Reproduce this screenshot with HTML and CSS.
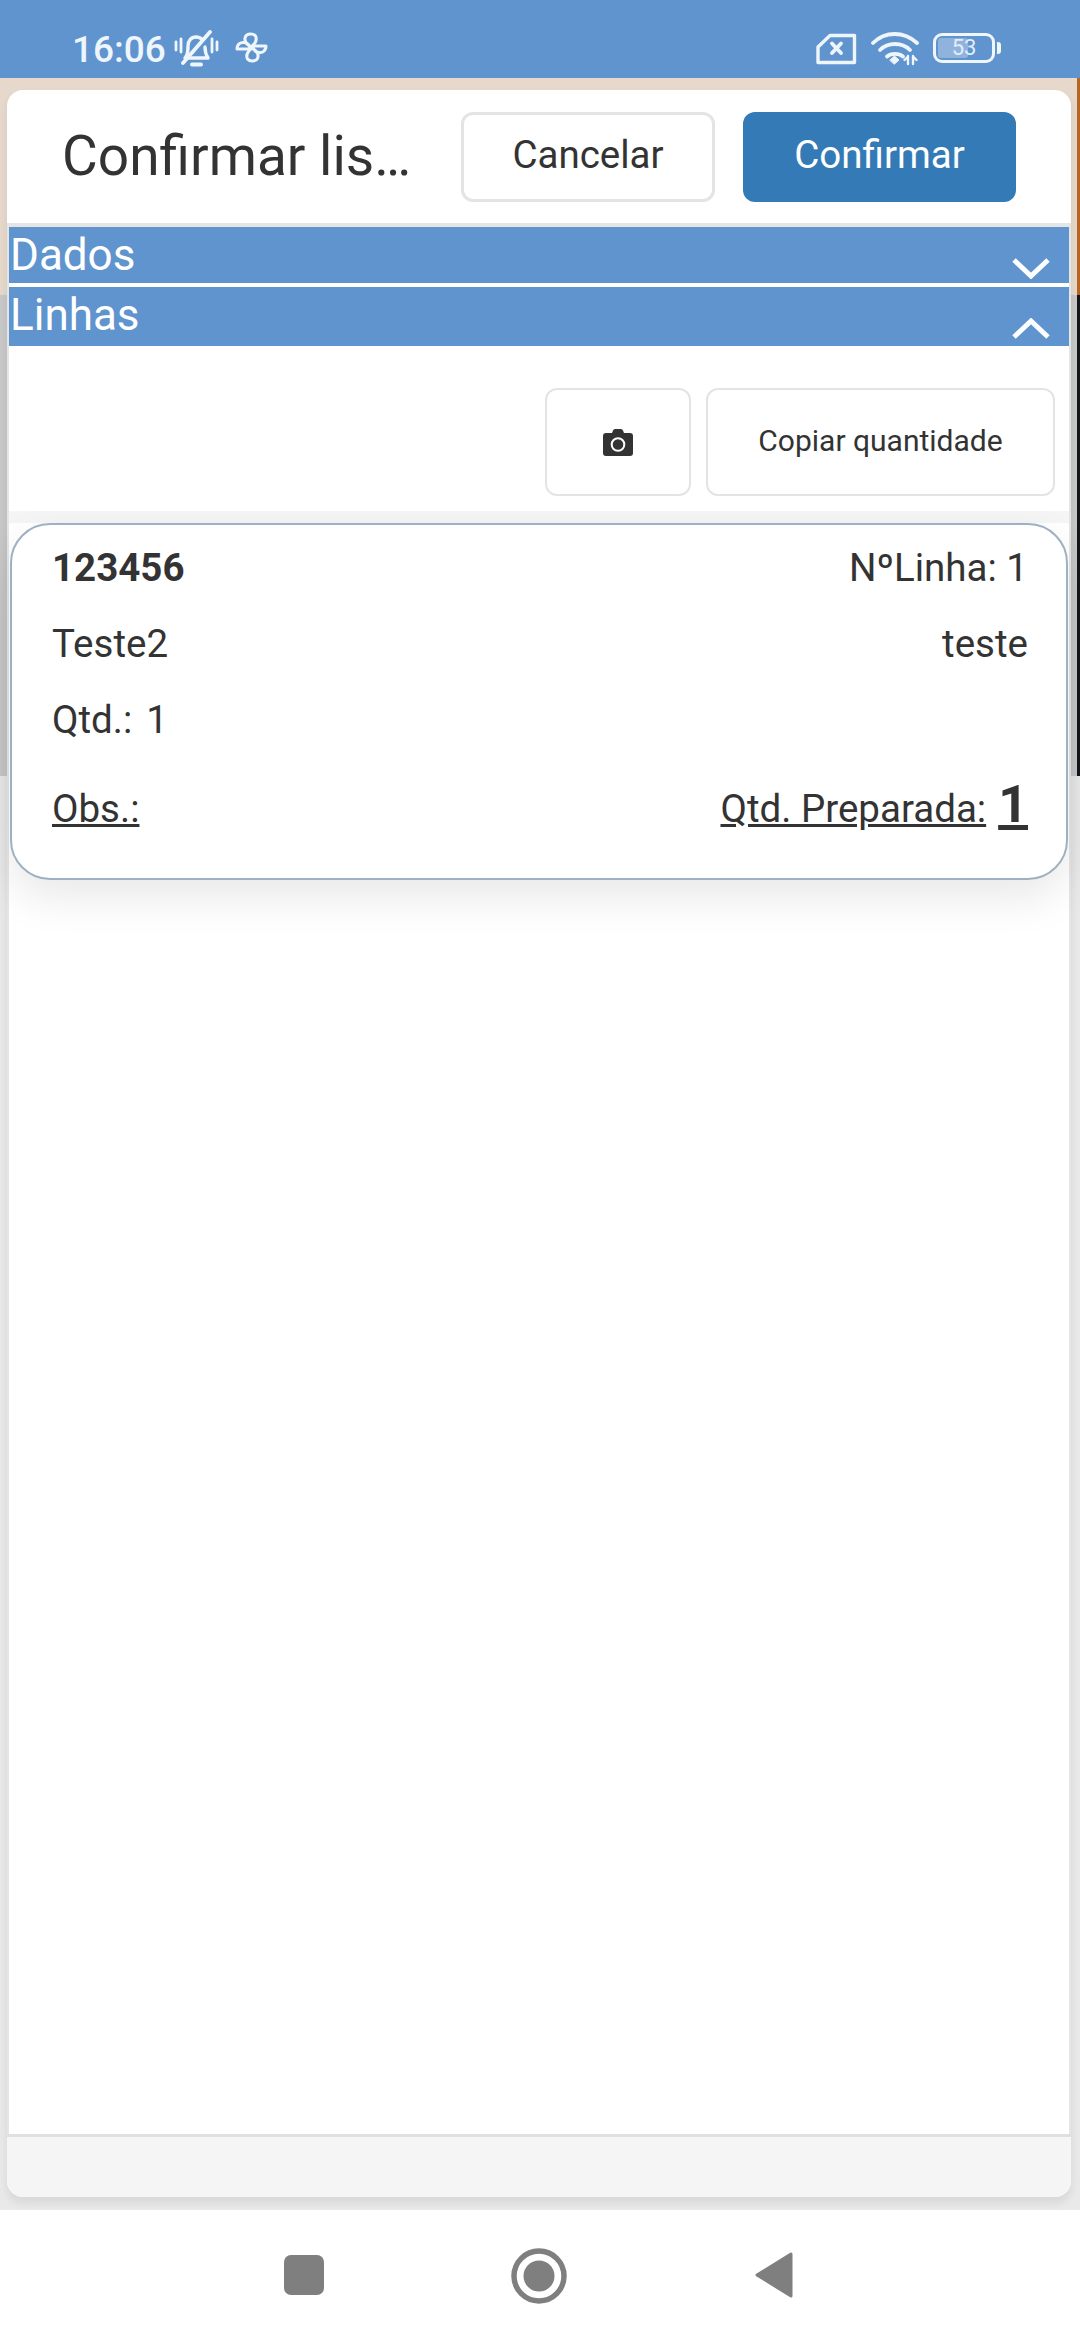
FILE: index.html
```html
<!DOCTYPE html>
<html lang="pt">
<head>
<meta charset="utf-8">
<title>Confirmar lista</title>
<link rel="stylesheet" href="styles.css">
</head>
<body>
<div class="phone">
  <header class="status">
    <span class="time">16:06</span>
    <svg class="ic-bell" viewBox="0 0 45 37" fill="none" stroke="#eef5fb" stroke-width="3.400" stroke-linecap="round" stroke-linejoin="round">
      <path d="M2 12v8M7 9v13M38 9v13M43 12v8" stroke-width="2.800"/>
      <path d="M11 28c3-3 3-7 3-12 0-5 3-9 8-9 3 0 5 1 6.500 3M31 17c0 5 1 8 3 11H11"/>
      <path d="M9 33 36 2" stroke-width="3.800"/>
      <path d="M18 34.500h9" stroke-width="4"/>
    </svg>
    <svg class="ic-fan" viewBox="0 0 33 31" fill="none" stroke="#eef5fb" stroke-width="3" stroke-linejoin="round">
      <path d="M16 15C11 12 9 8 10.500 4.500 12 1.500 18 1 20.500 4 22 7 21 11 16 15Z"/>
      <path d="M18 14H31C31 19 27 21 24 20.500 21 20 18 18 18 14Z"/>
      <path d="M17 16C22 19 24 23 22.500 26.500 21 29.500 15 30 12.500 27 11 24 12 20 17 16Z"/>
      <path d="M15 17H2C2 12 6 10 9 10.500 12 11 15 13 15 17Z"/>
    </svg>
    <span class="status-right">
      <svg class="ic-sim" viewBox="0 0 41 32" fill="none" stroke="#eef5fb" stroke-width="3.400" stroke-linejoin="round" stroke-linecap="round">
        <path d="M14 2.500H38.500V29.500H2V14Z"/>
        <path d="M16 10.500 25 20M25 10.500 16 20" stroke-width="3.800"/>
      </svg>
      <svg class="ic-wifi" viewBox="0 0 48 34" fill="none" stroke="#eef5fb" stroke-linecap="round">
        <path d="M2 11C14 -1 33 -1 46 11" stroke-width="3.800"/>
        <path d="M9 18C17 10 31 10 39 18" stroke-width="3.800"/>
        <path d="M16 24.500C20 21 28 21 32 24.500" stroke-width="3.800"/>
        <path d="M19 28 23.500 24 28 28 23.500 32Z" fill="#eef5fb" stroke-width="1"/>
        <path d="M37 24v8M42 32v-8M33.500 28 37 24.500M42 24.500 45.500 28" stroke-width="2.400"/>
      </svg>
      <span class="battery">
        <span class="battery-box"><span class="battery-level"></span><span class="battery-num">53</span></span>
        <span class="battery-tip"></span>
      </span>
    </span>
  </header>

  <main class="backdrop">
    <section class="dialog">
      <div class="dialog-head">
        <h1 class="dialog-title">Confirmar lis…</h1>
        <button class="btn btn-cancel">Cancelar</button>
        <button class="btn btn-confirm">Confirmar</button>
      </div>

      <div class="dialog-body">
        <div class="bar">
          <span>Dados</span>
          <svg class="chev chev-down" viewBox="0 0 38 22" fill="none" stroke="#fff" stroke-width="5"><path d="M2 3 19 19 36 3"/></svg>
        </div>
        <div class="bar bar-two">
          <span>Linhas</span>
          <svg class="chev chev-up" viewBox="0 0 38 22" fill="none" stroke="#fff" stroke-width="5"><path d="M2 19 19 3 36 19"/></svg>
        </div>

        <div class="toolbar">
          <button class="tool tool-cam" aria-label="Foto">
            <svg class="ic-cam" viewBox="0 0 30 27"><path fill="#333" d="M9 4 10 1.500Q10.500 0 12 0H18Q19.500 0 20 1.500L21 4H27Q30 4 30 7V24Q30 27 27 27H3Q0 27 0 24V7Q0 4 3 4Z"/><circle cx="15" cy="15.500" r="6.300" fill="none" stroke="#fff" stroke-width="2"/></svg>
          </button>
          <button class="tool tool-copy">Copiar quantidade</button>
        </div>

        <div class="list">
          <article class="card">
            <div class="row"><b class="code">123456</b><span>NºLinha: 1</span></div>
            <div class="row"><span>Teste2</span><span>teste</span></div>
            <div class="row"><span>Qtd.:<span class="qty">1</span></span></div>
            <div class="row row-last"><u>Obs.:</u><span><u>Qtd. Preparada:</u><u class="big">1</u></span></div>
          </article>
        </div>
      </div>

      <div class="dialog-foot"></div>
    </section>
  </main>

  <nav class="navbar">
    <span class="nav-square"></span>
    <svg class="nav-home" viewBox="0 0 56 56"><circle cx="28" cy="28" r="25" fill="none" stroke="#7f7f7f" stroke-width="5.500"/><circle cx="28" cy="28" r="15.500" fill="#7f7f7f"/></svg>
    <svg class="nav-back" viewBox="0 0 38 46"><path fill="#7f7f7f" stroke="#7f7f7f" stroke-width="3" stroke-linejoin="round" d="M2 23 36 2V44Z"/></svg>
  </nav>
</div>
</body>
</html>
```
FILE: styles.css
```css
* { box-sizing: border-box; }
html, body { margin: 0; padding: 0; background: #fff; }
body { font-family: Roboto, "Liberation Sans", sans-serif; color: #333; }

.phone { width: 1080px; height: 2340px; display: flex; flex-direction: column; overflow: hidden; }

/* status bar */
.status {
  height: 78px; flex: none; background: #5f94cf; color: #eef5fb;
  display: flex; align-items: flex-start; padding: 30px 79px 0 72px;
}
.time { font-size: 37px; font-weight: 500; line-height: 40px; }
.ic-bell { width: 45px; height: 37px; margin-left: 8px; }
.ic-fan { width: 33px; height: 31px; margin: 2px 0 0 16px; }
.status-right { margin-left: auto; display: flex; align-items: flex-start; }
.ic-sim { width: 41px; height: 32px; margin-top: 3px; }
.ic-wifi { width: 48px; height: 34px; margin: 2px 0 0 14px; }
.battery { display: flex; align-items: center; margin: 3px 0 0 14px; }
.battery-box {
  width: 62px; height: 30px; border: 3px solid #eef5fb; border-radius: 9px;
  display: flex; align-items: center; justify-content: center; overflow: hidden; position: relative;
}
.battery-level { position: absolute; left: 2px; top: 2px; bottom: 2px; width: 30px; background: #8fb3dd; border-radius: 3px; }
.battery-num { position: relative; font-size: 22px; line-height: 24px; color: #e3edf7; }
.battery-tip { width: 4px; height: 12px; margin-left: 2px; background: #eef5fb; border-radius: 0 3px 3px 0; }

/* dimmed page behind the dialog */
.backdrop {
  height: 2132px; flex: none; overflow: hidden; padding: 12px 9px 0 7px;
  background:
    linear-gradient(to bottom, #b9651f 0 217px, #14161a 217px 698px, transparent 698px) right top / 3px 100% no-repeat,
    linear-gradient(to bottom, #e6d9cc 0 217px, #c8c8c8 217px 698px, #e9e9e9 698px);
}
.dialog {
  height: 2107px; background: #fff; border-radius: 16px; display: flex; flex-direction: column;
  box-shadow: 0 6px 10px rgba(0, 0, 0, .08);
}
.dialog-head {
  height: 137px; flex: none; border-bottom: 4px solid #e5e5e5;
  display: flex; align-items: flex-start; padding: 22px 55px 0 55px;
}
.dialog-title { margin: 0; width: 399px; flex: none; font-size: 55px; font-weight: 400; line-height: 88px; white-space: nowrap; }
.btn {
  height: 90px; border-radius: 12px; font-family: inherit; font-size: 38.500px; padding: 0 0 5px; cursor: pointer;
}
.btn-cancel { width: 254px; background: #fff; border: 3px solid #e4e4e4; color: #333; }
.btn-confirm { width: 273px; margin-left: 28px; background: #337ab7; border: 0; color: #fff; }

.dialog-body {
  flex: 1; min-height: 0; display: flex; flex-direction: column;
  border-left: 2px solid #e5e5e5; border-right: 2px solid #e5e5e5;
}
.bar {
  height: 56px; flex: none; background: #5f94cf; color: #fff; font-size: 44px; line-height: 56px;
  padding-left: 1px; display: flex; justify-content: space-between;
}
.bar-two { height: 59px; margin-top: 4px; }
.chev { width: 38px; height: 22px; margin-right: 19px; }
.chev-down { margin-top: 30px; }
.chev-up { margin-top: 31px; }

.toolbar {
  height: 165px; flex: none; background: #fff; position: relative; z-index: 1;
  display: flex; justify-content: flex-end; gap: 15px; padding: 42px 14px 0 0;
}
.tool { height: 108px; background: #fff; border: 2px solid #e4e4e4; border-radius: 12px; font-family: inherit; color: #333; padding: 0; }
.tool-cam { width: 146px; display: flex; align-items: center; justify-content: center; }
.ic-cam { width: 30px; height: 27px; }
.tool-copy { width: 349px; font-size: 30px; padding-bottom: 3px; }

.list {
  padding: 12px 1px 0 1px; flex: 1; min-height: 0;
  background: linear-gradient(#f5f5f5, #f5f5f5) top / 100% 12px no-repeat;
}
.card {
  height: 357px; background: #fff; border: 2px solid #9fb1c1; border-radius: 40px;
  padding: 5px 38px 0 40px; font-size: 38.500px;
  box-shadow: 0 18px 44px rgba(0, 0, 0, .09);
}
.row { height: 76px; line-height: 76px; display: flex; justify-content: space-between; align-items: baseline; }
.row-last { margin-top: 13px; }
.code { font-weight: 700; }
.qty { margin-left: 14px; }
.big { font-size: 52px; font-weight: 700; line-height: 1; margin-left: 12px; }

.dialog-foot {
  height: 63px; flex: none; background: #f5f5f5; border-top: 3px solid #e0e0e0; border-radius: 0 0 16px 16px;
}

/* navigation bar */
.navbar { height: 130px; flex: none; background: #fff; display: flex; align-items: flex-start; padding: 38px 0 0 284px; }
.nav-square { width: 40px; height: 40px; margin-top: 7px; background: #7f7f7f; border-radius: 7px; }
.nav-home { width: 56px; height: 56px; margin-left: 187px; }
.nav-back { width: 38px; height: 46px; margin: 4px 0 0 188px; }
```
